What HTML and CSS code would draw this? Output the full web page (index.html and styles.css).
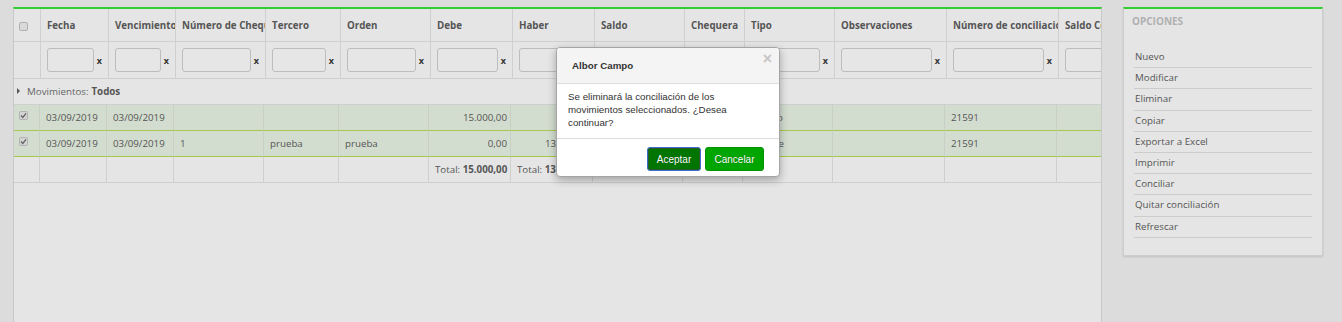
FILE: index.html
```html
<!DOCTYPE html>
<html lang="es">
<head>
    <meta charset="UTF-8">
    <title>Movimientos - Conciliación</title>
    <link rel="stylesheet" href="styles.css">
</head>
<body>
  <div class="page">
    <div class="grid">
      <div class="grid-head">
        <div class="row head-row cols-head">
          <div class="cell"><span class="chk"></span></div>
          <div class="cell">Fecha</div>
          <div class="cell">Vencimiento</div>
          <div class="cell">Número de Cheque</div>
          <div class="cell">Tercero</div>
          <div class="cell">Orden</div>
          <div class="cell">Debe</div>
          <div class="cell">Haber</div>
          <div class="cell">Saldo</div>
          <div class="cell">Chequera</div>
          <div class="cell">Tipo</div>
          <div class="cell">Observaciones</div>
          <div class="cell">Número de conciliación</div>
          <div class="cell">Saldo Conciliado</div>
        </div>
        <div class="row filter-row cols-head">
          <div class="cell"></div>
          <div class="cell"><input class="filtro"><b>x</b></div>
          <div class="cell"><input class="filtro"><b>x</b></div>
          <div class="cell"><input class="filtro"><b>x</b></div>
          <div class="cell"><input class="filtro"><b>x</b></div>
          <div class="cell"><input class="filtro"><b>x</b></div>
          <div class="cell"><input class="filtro"><b>x</b></div>
          <div class="cell"><input class="filtro"><b>x</b></div>
          <div class="cell"><input class="filtro"><b>x</b></div>
          <div class="cell"><input class="filtro"><b>x</b></div>
          <div class="cell"><input class="filtro"><b>x</b></div>
          <div class="cell"><input class="filtro"><b>x</b></div>
          <div class="cell"><input class="filtro"><b>x</b></div>
          <div class="cell"><input class="filtro"><b>x</b></div>
        </div>
      </div>

      <div class="grid-body">
        <div class="group-row"><span class="tri"></span>Movimientos: <b>Todos</b></div>

        <div class="row data-row sel cols-body">
          <div class="cell"><span class="chk on"><svg width="9" height="9" viewBox="0 0 9 9"><path d="M2 4.6 L3.8 6.4 L7 2.4" fill="none" stroke="#666" stroke-width="1.4"/></svg></span></div>
          <div class="cell">03/09/2019</div>
          <div class="cell">03/09/2019</div>
          <div class="cell"></div>
          <div class="cell"></div>
          <div class="cell"></div>
          <div class="cell num">15.000,00</div>
          <div class="cell num">0,00</div>
          <div class="cell num">15.000,00</div>
          <div class="cell"></div>
          <div class="cell">Ingreso</div>
          <div class="cell"></div>
          <div class="cell">21591</div>
          <div class="cell"></div>
        </div>

        <div class="row data-row sel cols-body">
          <div class="cell"><span class="chk on"><svg width="9" height="9" viewBox="0 0 9 9"><path d="M2 4.6 L3.8 6.4 L7 2.4" fill="none" stroke="#666" stroke-width="1.4"/></svg></span></div>
          <div class="cell">03/09/2019</div>
          <div class="cell">03/09/2019</div>
          <div class="cell">1</div>
          <div class="cell">prueba</div>
          <div class="cell">prueba</div>
          <div class="cell num">0,00</div>
          <div class="cell num">13.000,00</div>
          <div class="cell num">2.000,00</div>
          <div class="cell"></div>
          <div class="cell">Cheque</div>
          <div class="cell"></div>
          <div class="cell">21591</div>
          <div class="cell"></div>
        </div>

        <div class="row foot-row cols-body">
          <div class="cell"></div>
          <div class="cell"></div>
          <div class="cell"></div>
          <div class="cell"></div>
          <div class="cell"></div>
          <div class="cell"></div>
          <div class="cell">Total:&nbsp;<b>15.000,00</b></div>
          <div class="cell">Total:&nbsp;<b>13.000,00</b></div>
          <div class="cell"></div>
          <div class="cell"></div>
          <div class="cell"></div>
          <div class="cell"></div>
          <div class="cell"></div>
          <div class="cell"></div>
        </div>
      </div>
    </div>

    <aside class="panel">
      <div class="panel-title">OPCIONES</div>
      <ul class="menu">
        <li>Nuevo</li>
        <li>Modificar</li>
        <li>Eliminar</li>
        <li>Copiar</li>
        <li>Exportar a Excel</li>
        <li>Imprimir</li>
        <li>Conciliar</li>
        <li>Quitar conciliación</li>
        <li>Refrescar</li>
      </ul>
    </aside>
  </div>

  <div class="dialog">
    <div class="dialog-head">
      <span class="dialog-title">Albor Campo</span>
      <span class="dialog-close">&times;</span>
    </div>
    <div class="dialog-body">Se eliminará la conciliación de los movimientos seleccionados. ¿Desea continuar?</div>
    <div class="dialog-foot">
      <button class="btn btn-ok">Aceptar</button>
      <button class="btn btn-cancel">Cancelar</button>
    </div>
  </div>
</body>
</html>
```

FILE: styles.css
```css
body { margin: 0; background: #dcdcdc; font-family: "Open Sans", "DejaVu Sans", sans-serif; font-size: 9.75px; color: #555; }
.page { display: flex; align-items: flex-start; padding: 7px 0 0 13px; }

/* grilla */
.grid { width: 1089px; height: 315px; box-sizing: border-box; border: 1px solid #c8c8c8; border-top: 2px solid #33cc33; border-bottom: none; background: #e5e5e5; overflow: hidden; }
.row { display: grid; white-space: nowrap; }
.cols-head { grid-template-columns: 27px 68px 67px 90px 75px 90px 82px 82px 90px 60px 90px 112px 112px 100px; }
.cols-body { grid-template-columns: 26px 67px 67px 90px 75px 90px 82px 82px 90px 60px 90px 112px 112px 100px; }
.cell { box-sizing: border-box; display: flex; align-items: center; padding: 0 6px; border-right: 1px solid #cfcfcf; border-bottom: 1px solid #cfcfcf; overflow: hidden; }
.cell.num { justify-content: flex-end; padding-right: 3px; }

.head-row .cell { height: 33px; font-weight: bold; color: #555; }
.head-row .cell:first-child { padding-left: 5px; padding-top: 2px; }
.filter-row .cell { height: 37px; gap: 3px; }
.filtro { flex: 1; min-width: 0; height: 24px; box-sizing: border-box; margin: 0; border: 1px solid #bdbdbd; border-radius: 3px; background: #e6e6e6; }
.filter-row b { font-size: 9px; color: #333; }

.chk { display: inline-block; width: 9px; height: 9px; box-sizing: border-box; border: 1px solid #b0b0b0; border-radius: 2px; background: #d9d9d9; }
.chk.on { border: none; background: none; }
.chk.on svg { display: block; background: #d4d4d4; border-radius: 2px; box-shadow: inset 0 0 0 1px #b4b4b4; }

.group-row { height: 26px; box-sizing: border-box; display: flex; align-items: center; padding-left: 3px; border-bottom: 1px solid #cfcfcf; color: #666; }
.group-row b { color: #555; margin-left: 3px; }
.tri { width: 0; height: 0; border-top: 3px solid transparent; border-bottom: 3px solid transparent; border-left: 3px solid #555; margin: 0 7px 2px 0; }

.data-row .cell { height: 26px; }
.data-row.sel { background: #d3ddcf; }
.data-row.sel .cell { border-right-color: #c7d0c3; border-bottom-color: #a6c84c; }
.data-row .cell:first-child { align-items: flex-start; padding: 6px 0 0 5px; }
.foot-row .cell { height: 26px; }

/* panel de opciones */
.panel { width: 200px; height: 249px; margin-left: 21px; box-sizing: border-box; background: #e5e5e5; border: 1px solid #cdcdcd; border-top: 2px solid #33cc33; box-shadow: 0 1px 2px rgba(0,0,0,.12); padding: 0 10px; }
.panel-title { height: 24px; line-height: 24px; margin-left: -2px; font-weight: bold; color: #b0b0b0; font-size: 10px; }
.menu { list-style: none; margin: 14px 0 0; padding: 0; }
.menu li { line-height: 20.2px; border-bottom: 1px solid #cccccc; padding-left: 1px; color: #555; }

/* dialogo */
.dialog { position: absolute; left: 556px; top: 47px; width: 224px; height: 130px; box-sizing: border-box; background: #fff; border: 1px solid #a5a5a5; border-radius: 4px; box-shadow: 0 3px 8px rgba(0,0,0,.3); font-family: "Liberation Sans", Arial, sans-serif; font-size: 9.75px; color: #333; overflow: hidden; }
.dialog-head { height: 36px; box-sizing: border-box; display: flex; justify-content: space-between; align-items: flex-start; background: #f4f4f4; border-bottom: 1px solid #dcdcdc; padding: 0 7px 0 15px; }
.dialog-title { font-weight: bold; line-height: 36px; color: #333; }
.dialog-close { font-weight: bold; font-size: 16px; line-height: 16px; color: #c6c6c6; margin-top: 3px; }
.dialog-body { height: 55px; box-sizing: border-box; padding: 6px 11px 0; line-height: 13px; border-bottom: 1px solid #dcdcdc; }
.dialog-foot { display: flex; justify-content: flex-end; gap: 4px; padding: 8px 15px 0 0; }
.btn { height: 24px; box-sizing: border-box; border-radius: 3px; color: #fff; font-family: "Liberation Sans", Arial, sans-serif; font-size: 10px; padding: 0; cursor: pointer; text-shadow: 0 0 1px rgba(0,0,0,.4); }
.btn-ok { width: 54px; background: #007500; border: 1px solid #3d6fca; box-shadow: inset 0 0 0 1px #2a5a2a; }
.btn-cancel { width: 59px; background: #00a500; border: 1px solid #009400; }
.btn:hover { filter: brightness(1.05); }
```
